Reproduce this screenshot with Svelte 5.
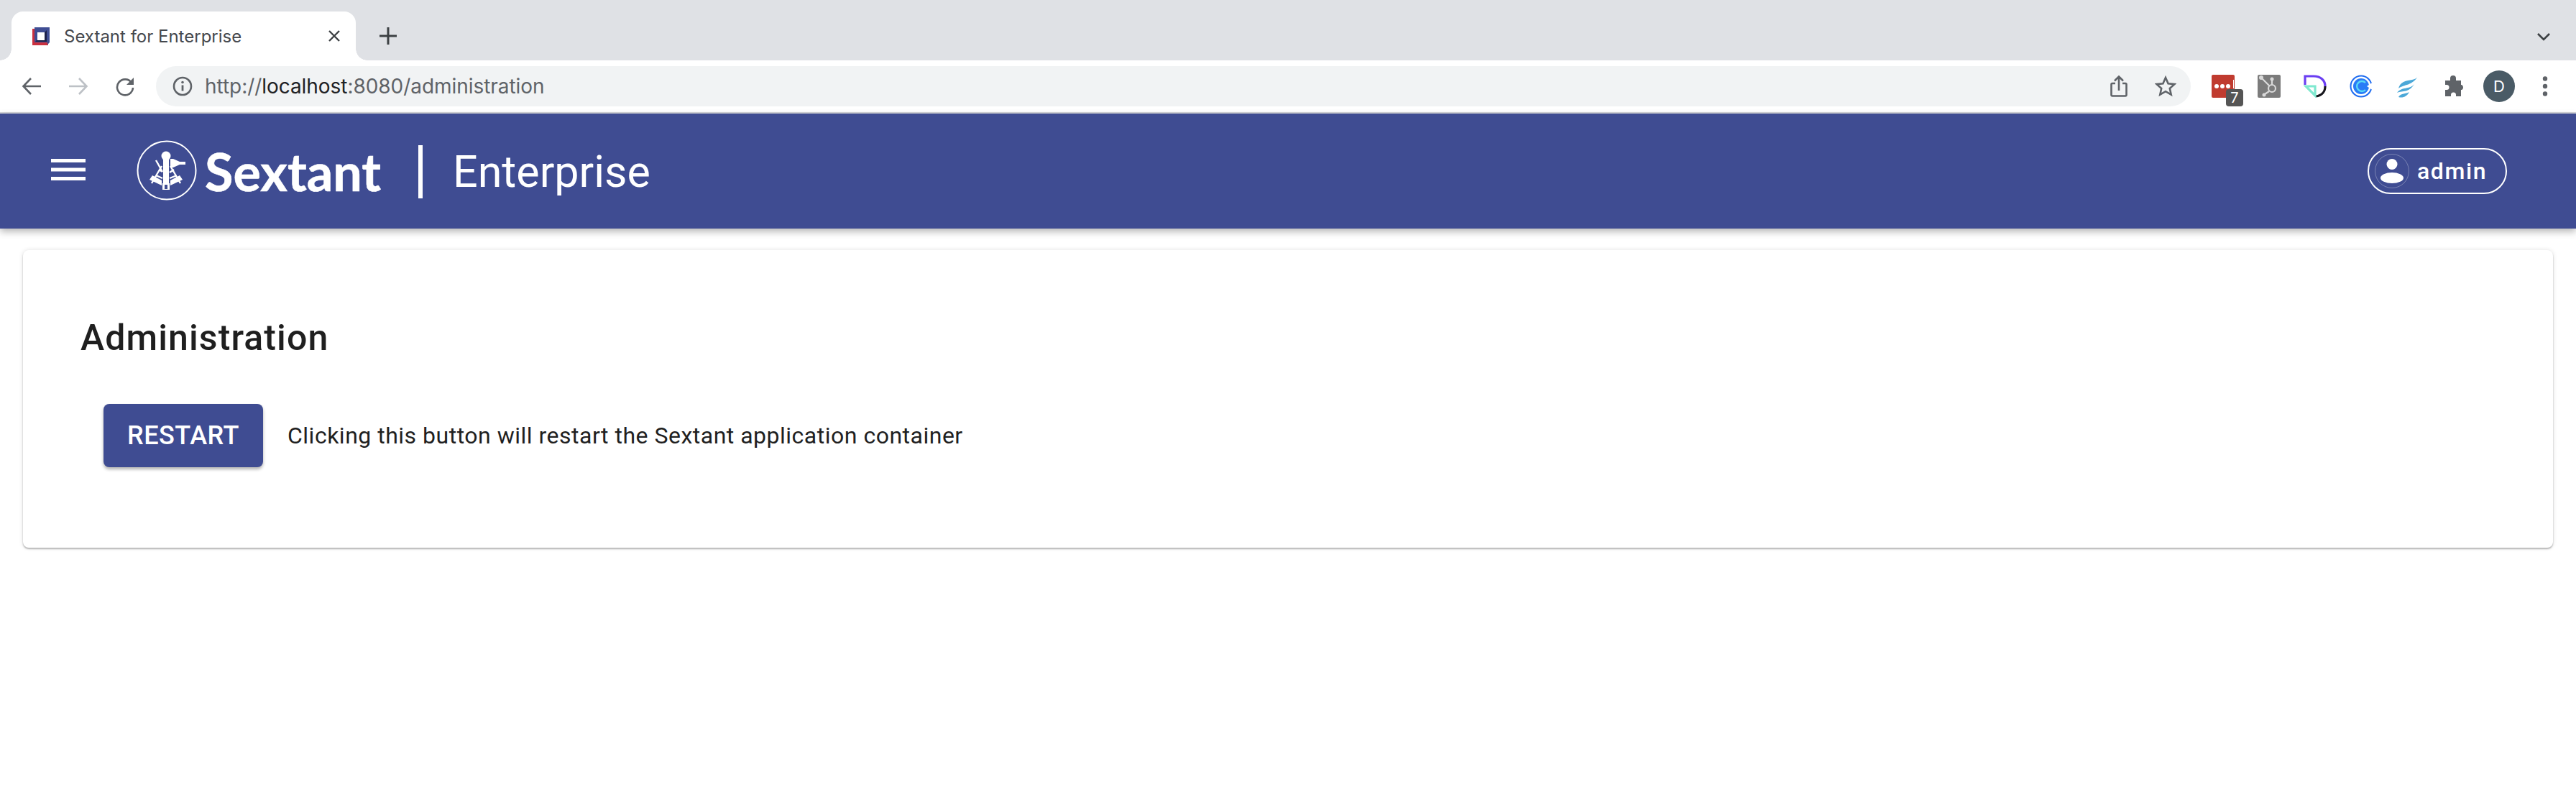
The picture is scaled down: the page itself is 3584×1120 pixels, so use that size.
<script lang="ts">
  const tabTitle = 'Sextant for Enterprise';
</script>

<div class="page">
  <div class="tabstrip">
    <div class="tab">
      <svg class="favicon" viewBox="0 0 24 25" width="24" height="25">
        <rect x="0" y="2" width="22" height="23" fill="#c9303f" />
        <path d="M3 0H24V21L21 24V3H3Z" fill="#3f4d93" />
        <rect x="3" y="3" width="18" height="18" fill="#3f4d93" />
        <path d="M4 20H20V4L16 8H8V16Z" fill="#1b2048" />
        <rect x="7" y="7" width="10" height="11" fill="#fff" />
      </svg>
      <span class="tab-title">{tabTitle}</span>
      <svg class="tab-close" viewBox="0 0 20 20" width="20" height="20"><path d="M3 3L17 17M17 3L3 17" stroke="#3c4043" stroke-width="2.4" fill="none" /></svg>
    </div>
    <svg class="new-tab" viewBox="0 0 24 24" width="24" height="24"><path d="M12 0V24M0 12H24" stroke="#3c4043" stroke-width="3" fill="none" /></svg>
    <svg class="tab-menu" viewBox="0 0 20 12" width="20" height="12"><path d="M2 2L10 10L18 2" stroke="#3c4043" stroke-width="2.6" fill="none" /></svg>
  </div>

  <div class="toolbar">
    <svg class="nav back" viewBox="0 0 28 28" width="28" height="28"><path d="M27 14H3M13 3L2.500 14L13 25" stroke="#5f6368" stroke-width="2.6" fill="none" /></svg>
    <svg class="nav" viewBox="0 0 28 28" width="28" height="28"><path d="M1 14H25M15 3L25.500 14L15 25" stroke="#bdc1c6" stroke-width="2.6" fill="none" /></svg>
    <svg class="nav reload" viewBox="0 0 28 28" width="28" height="28"><path d="M23 9A11 11 0 1 0 25 16" stroke="#5f6368" stroke-width="2.6" fill="none" /><path d="M26 2V12H16Z" fill="#5f6368" /></svg>
    <div class="omnibox">
      <svg class="info" viewBox="0 0 28 28" width="28" height="28"><circle cx="14" cy="14" r="12" stroke="#5f6368" stroke-width="2.6" fill="none" /><path d="M14 12.500V20.500" stroke="#5f6368" stroke-width="2.8" /><circle cx="14" cy="8.500" r="1.800" fill="#5f6368" /></svg>
      <span class="url">http://<b>localhost</b>:8080/administration</span>
      <svg class="share" viewBox="0 0 24 30" width="24" height="30"><path d="M7 11H3A1.500 1.500 0 0 0 1.500 12.500V27A1.500 1.500 0 0 0 3 28.500H21A1.500 1.500 0 0 0 22.500 27V12.500A1.500 1.500 0 0 0 21 11H17M12 21V2M6 7.500L12 1.500L18 7.500" stroke="#5f6368" stroke-width="2.6" fill="none" /></svg>
      <svg class="star" viewBox="0 0 30 30" width="30" height="30"><path d="M15 3L18.600 11.200L27.400 12.100L20.800 18L22.700 26.700L15 22.200L7.300 26.700L9.200 18L2.600 12.100L11.400 11.200Z" stroke="#5f6368" stroke-width="2.6" fill="none" /></svg>
    </div>
    <div class="extensions">
      <div class="ext lastpass">
        <span class="dots"><i></i><i></i><i></i><u></u></span>
        <span class="badge">7</span>
      </div>
      <div class="ext hubspot">
        <svg viewBox="0 0 32 32" width="32" height="32"><g stroke="#d9d9d9" stroke-width="2.2" fill="none"><circle cx="20" cy="19" r="5" /><path d="M6 5L16.500 15.500M20 14V7M16 23L10 27" /></g><circle cx="5" cy="4" r="3" fill="#d9d9d9" /><circle cx="20" cy="6" r="2.500" fill="#d9d9d9" /><circle cx="9" cy="28" r="2.500" fill="#d9d9d9" /></svg>
      </div>
      <svg class="ext" viewBox="0 0 32 32" width="32" height="32">
        <path d="M2 14V2H14C24 2 30 8 30 16" stroke="#6b3ff2" stroke-width="3.200" fill="none" />
        <path d="M30 16C30 24 25 29 17 30" stroke="#16161c" stroke-width="3.200" fill="none" />
        <path d="M3 16H16V29Z" stroke="#7fe8cf" stroke-width="3.200" fill="none" />
      </svg>
      <svg class="ext" viewBox="0 0 32 32" width="32" height="32">
        <circle cx="16" cy="16" r="14.500" stroke="#1f6cf0" stroke-width="2" fill="none" />
        <circle cx="16" cy="16" r="11" fill="#2a7cf6" />
        <path d="M22 11A7 7 0 1 0 22 21" stroke="#59d9f5" stroke-width="2.400" fill="none" />
        <path d="M24 16L33 10V22Z" fill="#fff" />
      </svg>
      <svg class="ext" viewBox="0 0 32 32" width="32" height="32">
        <path d="M32 1C28 9 19 6 11 10C7 12 5 15 4 19C12 13 23 16 32 1Z" fill="#4ba8d8" />
        <path d="M26 13C20 21 9 16 2 25C10 22 19 25 26 13Z" fill="#4ba8d8" />
        <path d="M19 24C14 27 8 25 4 31C10 33 16 30 19 24Z" fill="#4ba8d8" />
      </svg>
      <svg class="ext" viewBox="0 0 32 32" width="32" height="32"><path d="M12 5A4 4 0 0 1 20 5V8H27V14H28A4 4 0 0 1 28 21H27V30H20V28A3.500 3.500 0 0 0 13 28V30H5V21H7A3.500 3.500 0 0 0 7 14H5V8H12Z" fill="#5f6368" /></svg>
      <div class="avatar">D</div>
      <svg class="kebab" viewBox="0 0 8 28" width="8" height="28"><circle cx="4" cy="3.500" r="3.200" fill="#5f6368" /><circle cx="4" cy="14" r="3.200" fill="#5f6368" /><circle cx="4" cy="24.500" r="3.200" fill="#5f6368" /></svg>
    </div>
  </div>

  <header class="appbar">
    <svg class="burger" viewBox="0 0 48 30" width="48" height="30"><path d="M0 2.500H48M0 15H48M0 27.500H48" stroke="#fff" stroke-width="5" /></svg>
    <svg class="logo" viewBox="0 0 84 84" width="84" height="84">
      <circle cx="42" cy="42" r="40.500" stroke="#fff" stroke-width="2" fill="none" />
      <circle cx="41" cy="22" r="6.500" fill="#fff" />
      <path d="M37 24H45V69H37Z" fill="#fff" />
      <path d="M36 60H46V69H36Z" fill="#fff" />
      <path d="M39 62H43V68H39Z" fill="#3f4c92" />
      <path d="M47 26L51 26L60 30H68V34H60L51 38H47Z" fill="#fff" />
      <path d="M27 28L36 44M35 36L21 60M47 36L61 60M27 49L36 53M46 53L56 49M31 41L36 44M46 45L52 41" stroke="#fff" stroke-width="2.400" fill="none" />
      <path d="M18 55L22 49L35 56V63ZM47 56L60 49L64 55L47 63Z" fill="#fff" />
    </svg>
    <span class="brand">Sextant</span>
    <span class="divider"></span>
    <span class="product">Enterprise</span>
    <button class="user" type="button">
      <span class="user-icon">
        <svg viewBox="0 0 34 34" width="34" height="34"><circle cx="17" cy="7.500" r="7.500" fill="#fff" /><ellipse cx="17" cy="26.500" rx="16" ry="7.500" fill="#fff" /></svg>
      </span>
      admin
    </button>
  </header>

  <main class="content">
    <section class="card">
      <h1>Administration</h1>
      <div class="row">
        <button class="restart" type="button">RESTART</button>
        <p>Clicking this button will restart the Sextant application container</p>
      </div>
    </section>
  </main>
</div>

<style>
  :global(body) { margin:0; background:#fff; }
  .page { width:3584px; height:1120px; overflow:hidden; font-family:Roboto, "Liberation Sans", sans-serif; background:#fff; }

  .tabstrip { height:84px; background:#dfe1e5; display:flex; align-items:flex-end; position:relative; padding-left:16px; box-sizing:border-box; }
  .tab { flex:none; width:479px; height:68px; box-sizing:border-box; background:#fff; border-radius:16px 16px 0 0; display:flex; align-items:center; padding-left:29px; position:relative; }
  .tab::before, .tab::after { content:""; position:absolute; bottom:0; width:16px; height:16px; }
  .tab::before { left:-16px; background:radial-gradient(circle at 0 0, transparent 15.5px, #fff 16px); }
  .tab::after { right:-16px; background:radial-gradient(circle at 100% 0, transparent 15.5px, #fff 16px); }
  .favicon { flex:none; margin-right:20px; }
  .tab-title { font:24px Inter, "Liberation Sans", sans-serif; color:#45484d; white-space:nowrap; }
  .tab-close { flex:none; margin-left:auto; margin-right:20px; }
  .new-tab { flex:none; margin:0 0 22px 33px; }
  .tab-menu { position:absolute; right:35px; top:45px; }

  .toolbar { height:72px; border-bottom:2px solid #d6d7da; display:flex; align-items:center; background:#fff; }
  .nav { flex:none; margin-right:37px; }
  .nav.back { margin-left:30px; }
  .nav.reload { margin-right:29px; }
  .omnibox { flex:none; width:2831px; height:56px; background:#f1f3f4; border-radius:28px; display:flex; align-items:center; padding:0 20px 0 23px; box-sizing:border-box; }
  .info { flex:none; }
  .url { margin-left:17px; font:28px Inter, "Liberation Sans", sans-serif; color:#5f6368; letter-spacing:-.05px; }
  .url b { font-weight:400; color:#202124; }
  .share { margin-left:auto; margin-right:38px; }

  .extensions { display:flex; align-items:center; gap:32px; margin-left:29px; }
  .ext { width:32px; height:32px; flex:none; position:relative; }
  .lastpass { background:#c03b2f; border-radius:2px; }
  .dots { display:flex; gap:2px; align-items:center; position:absolute; left:4px; top:13px; }
  .dots i { width:6px; height:6px; border-radius:50%; background:#fff; }
  .dots u { width:1px; height:12px; margin-left:2px; background:#fff; margin-top:-6px; }
  .badge { position:absolute; left:20px; top:20px; width:24px; height:24px; border-radius:4px; background:#555; color:#fff; font:20px/24px Inter, sans-serif; text-align:center; }
  .hubspot { background:#7b7b7b; border-radius:2px; }
  .avatar { width:44px; height:44px; border-radius:50%; background:#4a5b66; color:#fff; font:22px/44px Inter, sans-serif; text-align:center; margin-left:-6px; margin-right:6px; }
  .kebab { flex:none; }

  .appbar { height:160px; background:#3f4c92; box-shadow:0 4px 10px rgba(0,0,0,.3); display:flex; align-items:center; color:#fff; padding:0 96px 0 71px; position:relative; }
  .burger { flex:none; margin-right:71px; margin-top:-4px; }
  .logo { flex:none; margin-right:11px; margin-top:-2px; }
  .brand { flex:none; width:250px; font:700 72px Lato, "Open Sans", sans-serif; margin-top:0; -webkit-text-stroke:.6px #fff; }
  .divider { flex:none; width:6px; height:74px; background:#fff; margin:2px 42px 0 47px; }
  .product { font:400 61px Roboto, sans-serif; margin-top:2px; }
  .user { margin-left:auto; width:194px; height:64px; border:2px solid #fff; border-radius:32px; background:none; color:#fff; font:500 32px Roboto, sans-serif; letter-spacing:1.6px; display:flex; align-items:center; gap:11px; padding:0 0 0 8px; box-sizing:border-box; }
  .user-icon { flex:none; width:48px; height:48px; border-radius:50%; border:1px solid rgba(255,255,255,.3); box-sizing:border-box; display:flex; align-items:center; justify-content:center; }

  .content { padding:30px 32px; }
  .card { height:414px; box-sizing:border-box; background:#fff; border-radius:8px; padding:94px 80px 0; box-shadow:0 2px 2px rgba(0,0,0,.25), 0 0 6px rgba(0,0,0,.12); }
  h1 { margin:0; font:500 50px/56px Roboto, sans-serif; letter-spacing:1.1px; color:#1f1f1f; }
  .row { display:flex; align-items:center; gap:34px; margin:64px 0 0 32px; }
  .restart { width:222px; height:88px; background:#3f4c92; border:none; border-radius:8px; color:#fff; font:500 36px Roboto, sans-serif; letter-spacing:.5px; box-shadow:0 3px 4px rgba(0,0,0,.3); }
  p { margin:0; font:400 32px Roboto, sans-serif; letter-spacing:.5px; color:#1f1f1f; }
</style>
